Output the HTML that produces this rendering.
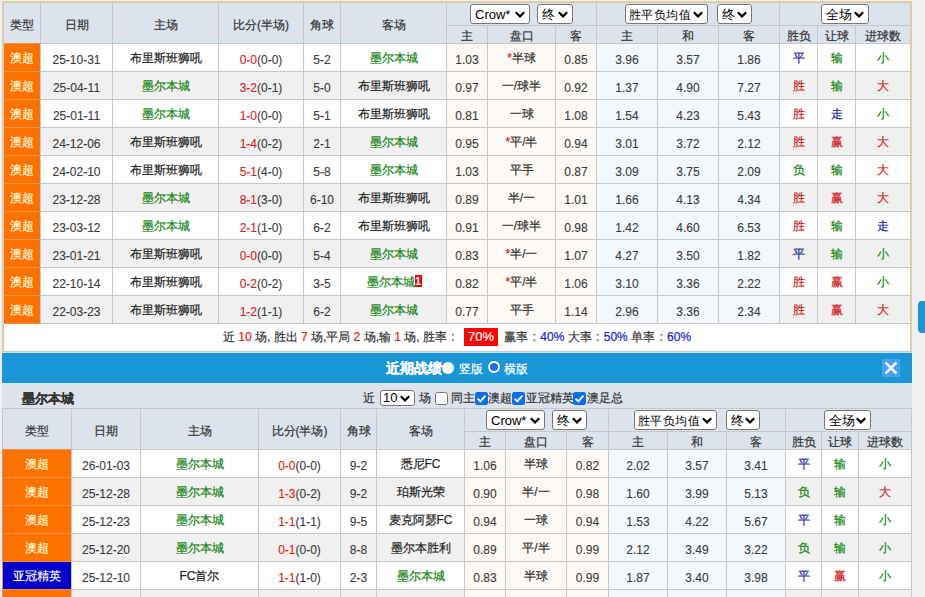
<!DOCTYPE html>
<html><head><meta charset="utf-8">
<style>
html,body{margin:0;padding:0;}
body{width:925px;height:597px;overflow:hidden;background:#f0f0f0;position:relative;font-family:"Liberation Sans",sans-serif;font-size:12px;color:#333;-webkit-text-stroke:0.2px currentColor;}
.c{position:absolute;box-sizing:content-box;text-align:center;white-space:nowrap;overflow:hidden;outline:1px solid #c5c7ca;}
.ln{position:absolute;}
.h{color:#333;}
.typ{color:#fff6d8;}
.g{color:#0f850f;}
.n{-webkit-text-stroke:0.1px currentColor;color:#3a3a3a;}
.k{color:#222;}
.r{color:#d42020;}
.u{color:#1c1c9c;}
.r2{color:#e02020;}
.rw{position:relative;left:-3px;}
.rc{position:absolute;right:-7px;top:0px;background:#e00;color:#fff;font-size:11px;line-height:12px;height:12px;width:7px;text-align:center;font-weight:bold;-webkit-text-stroke:0;}
.sel{position:absolute;box-sizing:border-box;background:#fff;border:1px solid #767676;border-radius:3px;}
#topbox{position:absolute;left:2px;top:0;width:906px;height:351px;border:2px solid #d9c6a0;border-bottom:0;background:#fff;}
#bar{position:absolute;left:2px;top:352px;width:910px;height:31px;background:#1a96d6;border-top:1px solid #bfe6f6;box-sizing:border-box;}
#grey{position:absolute;left:2px;top:383px;width:910px;height:214px;background:#dce3ed;border-top:1px solid #c8e8f8;box-sizing:border-box;}

.chev{position:absolute;}
.cb{position:absolute;}
.selt{position:absolute;color:#000;white-space:nowrap;-webkit-text-stroke:0;}
.t{position:absolute;white-space:nowrap;font-size:12px;line-height:14px;color:#333;}
.bold13{font-size:13px;font-weight:bold;}
.w{color:#fff;}
.bt{position:absolute;color:#fff;font-weight:bold;font-size:14px;line-height:16px;white-space:nowrap;}
.wdot{position:absolute;width:12px;height:12px;border-radius:50%;background:#fff;}
.rring{position:absolute;width:8px;height:8px;border-radius:50%;background:#1a6ff0;border:2px solid #fff;}
#close{position:absolute;left:882px;top:359px;width:18px;height:18px;background:#4ca3ec;}
#close svg{display:block;}
#sumrow{position:absolute;left:4px;top:324px;width:906px;height:27px;background:#fff;border-bottom:1px solid #c5c7ca;}
#sum{position:absolute;left:4px;top:324px;width:906px;height:27px;line-height:27px;text-align:center;white-space:nowrap;font-size:12px;color:#333;}
.b2{color:#1a1acc;}
.col{display:inline-block;width:12px;text-align:center;}
.rbox{display:inline-block;background:#f00;color:#fff;width:34px;height:18px;line-height:18px;text-align:center;font-size:13px;margin-left:5px;margin-right:3px;}
.tan{position:absolute;background:#d9c6a0;}
#tab{position:absolute;left:918px;top:301px;width:10px;height:32px;background:#1a96d6;border-radius:4px;}
</style></head><body>
<div id="topbox"></div>
<div id="bar"></div>
<div id="grey"></div>
<div id="tab"></div>
<div class="c h" style="left:4px;top:3px;width:36px;height:40px;line-height:44px;background:#dce3ed;">类型</div>
<div class="c h" style="left:41px;top:3px;width:71px;height:40px;line-height:44px;background:#dce3ed;">日期</div>
<div class="c h" style="left:113px;top:3px;width:105px;height:40px;line-height:44px;background:#dce3ed;">主场</div>
<div class="c h" style="left:219px;top:3px;width:84px;height:40px;line-height:44px;background:#dce3ed;">比分(半场)</div>
<div class="c h" style="left:304px;top:3px;width:36px;height:40px;line-height:44px;background:#dce3ed;">角球</div>
<div class="c h" style="left:341px;top:3px;width:105px;height:40px;line-height:44px;background:#dce3ed;">客场</div>
<div class="c h" style="left:447px;top:3px;width:149px;height:22px;line-height:27px;background:#dce3ed;"></div>
<div class="c h" style="left:597px;top:3px;width:182px;height:22px;line-height:27px;background:#dce3ed;"></div>
<div class="c h" style="left:780px;top:3px;width:130px;height:22px;line-height:27px;background:#dce3ed;"></div>
<div class="c h sub" style="left:447px;top:26px;width:40px;height:17px;line-height:21px;background:#dce3ed;">主</div>
<div class="c h sub" style="left:488px;top:26px;width:67px;height:17px;line-height:21px;background:#dce3ed;">盘口</div>
<div class="c h sub" style="left:556px;top:26px;width:40px;height:17px;line-height:21px;background:#dce3ed;">客</div>
<div class="c h sub" style="left:597px;top:26px;width:60px;height:17px;line-height:21px;background:#dce3ed;">主</div>
<div class="c h sub" style="left:658px;top:26px;width:60px;height:17px;line-height:21px;background:#dce3ed;">和</div>
<div class="c h sub" style="left:719px;top:26px;width:60px;height:17px;line-height:21px;background:#dce3ed;">客</div>
<div class="c h sub" style="left:780px;top:26px;width:37px;height:17px;line-height:21px;background:#dce3ed;">胜负</div>
<div class="c h sub" style="left:818px;top:26px;width:37px;height:17px;line-height:21px;background:#dce3ed;">让球</div>
<div class="c h sub" style="left:856px;top:26px;width:54px;height:17px;line-height:21px;background:#dce3ed;">进球数</div>
<div class="c typ" style="left:4px;top:44px;width:36px;height:27px;line-height:29px;background:#ff7200;outline-color:#f09040">澳超</div>
<div class="c n" style="left:41px;top:44px;width:71px;height:27px;line-height:32px;background:#ffffff;">25-10-31</div>
<div class="c k" style="left:113px;top:44px;width:105px;height:27px;line-height:28px;background:#ffffff;">布里斯班狮吼</div>
<div class="c n" style="left:219px;top:44px;width:84px;height:27px;line-height:32px;background:#ffffff;"><span class="r2">0-0</span>(0-0)</div>
<div class="c n" style="left:304px;top:44px;width:36px;height:27px;line-height:32px;background:#ffffff;">5-2</div>
<div class="c g" style="left:341px;top:44px;width:105px;height:27px;line-height:28px;background:#ffffff;">墨尔本城</div>
<div class="c n" style="left:447px;top:44px;width:40px;height:27px;line-height:32px;background:#fdf9f5;">1.03</div>
<div class="c " style="left:488px;top:44px;width:67px;height:27px;line-height:28px;background:#fdf9f5;"><span class="r2">*</span>半球</div>
<div class="c n" style="left:556px;top:44px;width:40px;height:27px;line-height:32px;background:#fdf9f5;">0.85</div>
<div class="c n" style="left:597px;top:44px;width:60px;height:27px;line-height:32px;background:#f2f8fc;">3.96</div>
<div class="c n" style="left:658px;top:44px;width:60px;height:27px;line-height:32px;background:#f2f8fc;">3.57</div>
<div class="c n" style="left:719px;top:44px;width:60px;height:27px;line-height:32px;background:#f2f8fc;">1.86</div>
<div class="c u" style="left:780px;top:44px;width:37px;height:27px;line-height:28px;background:#ffffff;">平</div>
<div class="c g" style="left:818px;top:44px;width:37px;height:27px;line-height:28px;background:#ffffff;">输</div>
<div class="c g" style="left:856px;top:44px;width:54px;height:27px;line-height:28px;background:#ffffff;">小</div>
<div class="c typ" style="left:4px;top:72px;width:36px;height:27px;line-height:29px;background:#ff7200;outline-color:#f09040">澳超</div>
<div class="c n" style="left:41px;top:72px;width:71px;height:27px;line-height:32px;background:#f0f0f0;">25-04-11</div>
<div class="c g" style="left:113px;top:72px;width:105px;height:27px;line-height:28px;background:#f0f0f0;">墨尔本城</div>
<div class="c n" style="left:219px;top:72px;width:84px;height:27px;line-height:32px;background:#f0f0f0;"><span class="r2">3-2</span>(0-1)</div>
<div class="c n" style="left:304px;top:72px;width:36px;height:27px;line-height:32px;background:#f0f0f0;">5-0</div>
<div class="c k" style="left:341px;top:72px;width:105px;height:27px;line-height:28px;background:#f0f0f0;">布里斯班狮吼</div>
<div class="c n" style="left:447px;top:72px;width:40px;height:27px;line-height:32px;background:#fdf9f5;">0.97</div>
<div class="c " style="left:488px;top:72px;width:67px;height:27px;line-height:28px;background:#fdf9f5;">一/球半</div>
<div class="c n" style="left:556px;top:72px;width:40px;height:27px;line-height:32px;background:#fdf9f5;">0.92</div>
<div class="c n" style="left:597px;top:72px;width:60px;height:27px;line-height:32px;background:#f2f8fc;">1.37</div>
<div class="c n" style="left:658px;top:72px;width:60px;height:27px;line-height:32px;background:#f2f8fc;">4.90</div>
<div class="c n" style="left:719px;top:72px;width:60px;height:27px;line-height:32px;background:#f2f8fc;">7.27</div>
<div class="c r" style="left:780px;top:72px;width:37px;height:27px;line-height:28px;background:#f0f0f0;">胜</div>
<div class="c g" style="left:818px;top:72px;width:37px;height:27px;line-height:28px;background:#f0f0f0;">输</div>
<div class="c r" style="left:856px;top:72px;width:54px;height:27px;line-height:28px;background:#f0f0f0;">大</div>
<div class="c typ" style="left:4px;top:100px;width:36px;height:27px;line-height:29px;background:#ff7200;outline-color:#f09040">澳超</div>
<div class="c n" style="left:41px;top:100px;width:71px;height:27px;line-height:32px;background:#ffffff;">25-01-11</div>
<div class="c g" style="left:113px;top:100px;width:105px;height:27px;line-height:28px;background:#ffffff;">墨尔本城</div>
<div class="c n" style="left:219px;top:100px;width:84px;height:27px;line-height:32px;background:#ffffff;"><span class="r2">1-0</span>(0-0)</div>
<div class="c n" style="left:304px;top:100px;width:36px;height:27px;line-height:32px;background:#ffffff;">5-1</div>
<div class="c k" style="left:341px;top:100px;width:105px;height:27px;line-height:28px;background:#ffffff;">布里斯班狮吼</div>
<div class="c n" style="left:447px;top:100px;width:40px;height:27px;line-height:32px;background:#fdf9f5;">0.81</div>
<div class="c " style="left:488px;top:100px;width:67px;height:27px;line-height:28px;background:#fdf9f5;">一球</div>
<div class="c n" style="left:556px;top:100px;width:40px;height:27px;line-height:32px;background:#fdf9f5;">1.08</div>
<div class="c n" style="left:597px;top:100px;width:60px;height:27px;line-height:32px;background:#f2f8fc;">1.54</div>
<div class="c n" style="left:658px;top:100px;width:60px;height:27px;line-height:32px;background:#f2f8fc;">4.23</div>
<div class="c n" style="left:719px;top:100px;width:60px;height:27px;line-height:32px;background:#f2f8fc;">5.43</div>
<div class="c r" style="left:780px;top:100px;width:37px;height:27px;line-height:28px;background:#ffffff;">胜</div>
<div class="c u" style="left:818px;top:100px;width:37px;height:27px;line-height:28px;background:#ffffff;">走</div>
<div class="c g" style="left:856px;top:100px;width:54px;height:27px;line-height:28px;background:#ffffff;">小</div>
<div class="c typ" style="left:4px;top:128px;width:36px;height:27px;line-height:29px;background:#ff7200;outline-color:#f09040">澳超</div>
<div class="c n" style="left:41px;top:128px;width:71px;height:27px;line-height:32px;background:#f0f0f0;">24-12-06</div>
<div class="c k" style="left:113px;top:128px;width:105px;height:27px;line-height:28px;background:#f0f0f0;">布里斯班狮吼</div>
<div class="c n" style="left:219px;top:128px;width:84px;height:27px;line-height:32px;background:#f0f0f0;"><span class="r2">1-4</span>(0-2)</div>
<div class="c n" style="left:304px;top:128px;width:36px;height:27px;line-height:32px;background:#f0f0f0;">2-1</div>
<div class="c g" style="left:341px;top:128px;width:105px;height:27px;line-height:28px;background:#f0f0f0;">墨尔本城</div>
<div class="c n" style="left:447px;top:128px;width:40px;height:27px;line-height:32px;background:#fdf9f5;">0.95</div>
<div class="c " style="left:488px;top:128px;width:67px;height:27px;line-height:28px;background:#fdf9f5;"><span class="r2">*</span>平/半</div>
<div class="c n" style="left:556px;top:128px;width:40px;height:27px;line-height:32px;background:#fdf9f5;">0.94</div>
<div class="c n" style="left:597px;top:128px;width:60px;height:27px;line-height:32px;background:#f2f8fc;">3.01</div>
<div class="c n" style="left:658px;top:128px;width:60px;height:27px;line-height:32px;background:#f2f8fc;">3.72</div>
<div class="c n" style="left:719px;top:128px;width:60px;height:27px;line-height:32px;background:#f2f8fc;">2.12</div>
<div class="c r" style="left:780px;top:128px;width:37px;height:27px;line-height:28px;background:#f0f0f0;">胜</div>
<div class="c r" style="left:818px;top:128px;width:37px;height:27px;line-height:28px;background:#f0f0f0;">赢</div>
<div class="c r" style="left:856px;top:128px;width:54px;height:27px;line-height:28px;background:#f0f0f0;">大</div>
<div class="c typ" style="left:4px;top:156px;width:36px;height:27px;line-height:29px;background:#ff7200;outline-color:#f09040">澳超</div>
<div class="c n" style="left:41px;top:156px;width:71px;height:27px;line-height:32px;background:#ffffff;">24-02-10</div>
<div class="c k" style="left:113px;top:156px;width:105px;height:27px;line-height:28px;background:#ffffff;">布里斯班狮吼</div>
<div class="c n" style="left:219px;top:156px;width:84px;height:27px;line-height:32px;background:#ffffff;"><span class="r2">5-1</span>(4-0)</div>
<div class="c n" style="left:304px;top:156px;width:36px;height:27px;line-height:32px;background:#ffffff;">5-8</div>
<div class="c g" style="left:341px;top:156px;width:105px;height:27px;line-height:28px;background:#ffffff;">墨尔本城</div>
<div class="c n" style="left:447px;top:156px;width:40px;height:27px;line-height:32px;background:#fdf9f5;">1.03</div>
<div class="c " style="left:488px;top:156px;width:67px;height:27px;line-height:28px;background:#fdf9f5;">平手</div>
<div class="c n" style="left:556px;top:156px;width:40px;height:27px;line-height:32px;background:#fdf9f5;">0.87</div>
<div class="c n" style="left:597px;top:156px;width:60px;height:27px;line-height:32px;background:#f2f8fc;">3.09</div>
<div class="c n" style="left:658px;top:156px;width:60px;height:27px;line-height:32px;background:#f2f8fc;">3.75</div>
<div class="c n" style="left:719px;top:156px;width:60px;height:27px;line-height:32px;background:#f2f8fc;">2.09</div>
<div class="c g" style="left:780px;top:156px;width:37px;height:27px;line-height:28px;background:#ffffff;">负</div>
<div class="c g" style="left:818px;top:156px;width:37px;height:27px;line-height:28px;background:#ffffff;">输</div>
<div class="c r" style="left:856px;top:156px;width:54px;height:27px;line-height:28px;background:#ffffff;">大</div>
<div class="c typ" style="left:4px;top:184px;width:36px;height:27px;line-height:29px;background:#ff7200;outline-color:#f09040">澳超</div>
<div class="c n" style="left:41px;top:184px;width:71px;height:27px;line-height:32px;background:#f0f0f0;">23-12-28</div>
<div class="c g" style="left:113px;top:184px;width:105px;height:27px;line-height:28px;background:#f0f0f0;">墨尔本城</div>
<div class="c n" style="left:219px;top:184px;width:84px;height:27px;line-height:32px;background:#f0f0f0;"><span class="r2">8-1</span>(3-0)</div>
<div class="c n" style="left:304px;top:184px;width:36px;height:27px;line-height:32px;background:#f0f0f0;">6-10</div>
<div class="c k" style="left:341px;top:184px;width:105px;height:27px;line-height:28px;background:#f0f0f0;">布里斯班狮吼</div>
<div class="c n" style="left:447px;top:184px;width:40px;height:27px;line-height:32px;background:#fdf9f5;">0.89</div>
<div class="c " style="left:488px;top:184px;width:67px;height:27px;line-height:28px;background:#fdf9f5;">半/一</div>
<div class="c n" style="left:556px;top:184px;width:40px;height:27px;line-height:32px;background:#fdf9f5;">1.01</div>
<div class="c n" style="left:597px;top:184px;width:60px;height:27px;line-height:32px;background:#f2f8fc;">1.66</div>
<div class="c n" style="left:658px;top:184px;width:60px;height:27px;line-height:32px;background:#f2f8fc;">4.13</div>
<div class="c n" style="left:719px;top:184px;width:60px;height:27px;line-height:32px;background:#f2f8fc;">4.34</div>
<div class="c r" style="left:780px;top:184px;width:37px;height:27px;line-height:28px;background:#f0f0f0;">胜</div>
<div class="c r" style="left:818px;top:184px;width:37px;height:27px;line-height:28px;background:#f0f0f0;">赢</div>
<div class="c r" style="left:856px;top:184px;width:54px;height:27px;line-height:28px;background:#f0f0f0;">大</div>
<div class="c typ" style="left:4px;top:212px;width:36px;height:27px;line-height:29px;background:#ff7200;outline-color:#f09040">澳超</div>
<div class="c n" style="left:41px;top:212px;width:71px;height:27px;line-height:32px;background:#ffffff;">23-03-12</div>
<div class="c g" style="left:113px;top:212px;width:105px;height:27px;line-height:28px;background:#ffffff;">墨尔本城</div>
<div class="c n" style="left:219px;top:212px;width:84px;height:27px;line-height:32px;background:#ffffff;"><span class="r2">2-1</span>(1-0)</div>
<div class="c n" style="left:304px;top:212px;width:36px;height:27px;line-height:32px;background:#ffffff;">6-2</div>
<div class="c k" style="left:341px;top:212px;width:105px;height:27px;line-height:28px;background:#ffffff;">布里斯班狮吼</div>
<div class="c n" style="left:447px;top:212px;width:40px;height:27px;line-height:32px;background:#fdf9f5;">0.91</div>
<div class="c " style="left:488px;top:212px;width:67px;height:27px;line-height:28px;background:#fdf9f5;">一/球半</div>
<div class="c n" style="left:556px;top:212px;width:40px;height:27px;line-height:32px;background:#fdf9f5;">0.98</div>
<div class="c n" style="left:597px;top:212px;width:60px;height:27px;line-height:32px;background:#f2f8fc;">1.42</div>
<div class="c n" style="left:658px;top:212px;width:60px;height:27px;line-height:32px;background:#f2f8fc;">4.60</div>
<div class="c n" style="left:719px;top:212px;width:60px;height:27px;line-height:32px;background:#f2f8fc;">6.53</div>
<div class="c r" style="left:780px;top:212px;width:37px;height:27px;line-height:28px;background:#ffffff;">胜</div>
<div class="c g" style="left:818px;top:212px;width:37px;height:27px;line-height:28px;background:#ffffff;">输</div>
<div class="c u" style="left:856px;top:212px;width:54px;height:27px;line-height:28px;background:#ffffff;">走</div>
<div class="c typ" style="left:4px;top:240px;width:36px;height:27px;line-height:29px;background:#ff7200;outline-color:#f09040">澳超</div>
<div class="c n" style="left:41px;top:240px;width:71px;height:27px;line-height:32px;background:#f0f0f0;">23-01-21</div>
<div class="c k" style="left:113px;top:240px;width:105px;height:27px;line-height:28px;background:#f0f0f0;">布里斯班狮吼</div>
<div class="c n" style="left:219px;top:240px;width:84px;height:27px;line-height:32px;background:#f0f0f0;"><span class="r2">0-0</span>(0-0)</div>
<div class="c n" style="left:304px;top:240px;width:36px;height:27px;line-height:32px;background:#f0f0f0;">5-4</div>
<div class="c g" style="left:341px;top:240px;width:105px;height:27px;line-height:28px;background:#f0f0f0;">墨尔本城</div>
<div class="c n" style="left:447px;top:240px;width:40px;height:27px;line-height:32px;background:#fdf9f5;">0.83</div>
<div class="c " style="left:488px;top:240px;width:67px;height:27px;line-height:28px;background:#fdf9f5;"><span class="r2">*</span>半/一</div>
<div class="c n" style="left:556px;top:240px;width:40px;height:27px;line-height:32px;background:#fdf9f5;">1.07</div>
<div class="c n" style="left:597px;top:240px;width:60px;height:27px;line-height:32px;background:#f2f8fc;">4.27</div>
<div class="c n" style="left:658px;top:240px;width:60px;height:27px;line-height:32px;background:#f2f8fc;">3.50</div>
<div class="c n" style="left:719px;top:240px;width:60px;height:27px;line-height:32px;background:#f2f8fc;">1.82</div>
<div class="c u" style="left:780px;top:240px;width:37px;height:27px;line-height:28px;background:#f0f0f0;">平</div>
<div class="c g" style="left:818px;top:240px;width:37px;height:27px;line-height:28px;background:#f0f0f0;">输</div>
<div class="c g" style="left:856px;top:240px;width:54px;height:27px;line-height:28px;background:#f0f0f0;">小</div>
<div class="c typ" style="left:4px;top:268px;width:36px;height:27px;line-height:29px;background:#ff7200;outline-color:#f09040">澳超</div>
<div class="c n" style="left:41px;top:268px;width:71px;height:27px;line-height:32px;background:#ffffff;">22-10-14</div>
<div class="c k" style="left:113px;top:268px;width:105px;height:27px;line-height:28px;background:#ffffff;">布里斯班狮吼</div>
<div class="c n" style="left:219px;top:268px;width:84px;height:27px;line-height:32px;background:#ffffff;"><span class="r2">0-2</span>(0-2)</div>
<div class="c n" style="left:304px;top:268px;width:36px;height:27px;line-height:32px;background:#ffffff;">3-5</div>
<div class="c g" style="left:341px;top:268px;width:105px;height:27px;line-height:28px;background:#ffffff;"><span class="rw">墨尔本城<b class="rc">1</b></span></div>
<div class="c n" style="left:447px;top:268px;width:40px;height:27px;line-height:32px;background:#fdf9f5;">0.82</div>
<div class="c " style="left:488px;top:268px;width:67px;height:27px;line-height:28px;background:#fdf9f5;"><span class="r2">*</span>平/半</div>
<div class="c n" style="left:556px;top:268px;width:40px;height:27px;line-height:32px;background:#fdf9f5;">1.06</div>
<div class="c n" style="left:597px;top:268px;width:60px;height:27px;line-height:32px;background:#f2f8fc;">3.10</div>
<div class="c n" style="left:658px;top:268px;width:60px;height:27px;line-height:32px;background:#f2f8fc;">3.36</div>
<div class="c n" style="left:719px;top:268px;width:60px;height:27px;line-height:32px;background:#f2f8fc;">2.22</div>
<div class="c r" style="left:780px;top:268px;width:37px;height:27px;line-height:28px;background:#ffffff;">胜</div>
<div class="c r" style="left:818px;top:268px;width:37px;height:27px;line-height:28px;background:#ffffff;">赢</div>
<div class="c g" style="left:856px;top:268px;width:54px;height:27px;line-height:28px;background:#ffffff;">小</div>
<div class="c typ" style="left:4px;top:296px;width:36px;height:27px;line-height:29px;background:#ff7200;outline-color:#f09040">澳超</div>
<div class="c n" style="left:41px;top:296px;width:71px;height:27px;line-height:32px;background:#f0f0f0;">22-03-23</div>
<div class="c k" style="left:113px;top:296px;width:105px;height:27px;line-height:28px;background:#f0f0f0;">布里斯班狮吼</div>
<div class="c n" style="left:219px;top:296px;width:84px;height:27px;line-height:32px;background:#f0f0f0;"><span class="r2">1-2</span>(1-1)</div>
<div class="c n" style="left:304px;top:296px;width:36px;height:27px;line-height:32px;background:#f0f0f0;">6-2</div>
<div class="c g" style="left:341px;top:296px;width:105px;height:27px;line-height:28px;background:#f0f0f0;">墨尔本城</div>
<div class="c n" style="left:447px;top:296px;width:40px;height:27px;line-height:32px;background:#fdf9f5;">0.77</div>
<div class="c " style="left:488px;top:296px;width:67px;height:27px;line-height:28px;background:#fdf9f5;">平手</div>
<div class="c n" style="left:556px;top:296px;width:40px;height:27px;line-height:32px;background:#fdf9f5;">1.14</div>
<div class="c n" style="left:597px;top:296px;width:60px;height:27px;line-height:32px;background:#f2f8fc;">2.96</div>
<div class="c n" style="left:658px;top:296px;width:60px;height:27px;line-height:32px;background:#f2f8fc;">3.36</div>
<div class="c n" style="left:719px;top:296px;width:60px;height:27px;line-height:32px;background:#f2f8fc;">2.34</div>
<div class="c r" style="left:780px;top:296px;width:37px;height:27px;line-height:28px;background:#f0f0f0;">胜</div>
<div class="c r" style="left:818px;top:296px;width:37px;height:27px;line-height:28px;background:#f0f0f0;">赢</div>
<div class="c r" style="left:856px;top:296px;width:54px;height:27px;line-height:28px;background:#f0f0f0;">大</div>
<div class="c h" style="left:3px;top:409px;width:68px;height:40px;line-height:44px;background:#dce3ed;">类型</div>
<div class="c h" style="left:72px;top:409px;width:68px;height:40px;line-height:44px;background:#dce3ed;">日期</div>
<div class="c h" style="left:141px;top:409px;width:117px;height:40px;line-height:44px;background:#dce3ed;">主场</div>
<div class="c h" style="left:259px;top:409px;width:81px;height:40px;line-height:44px;background:#dce3ed;">比分(半场)</div>
<div class="c h" style="left:341px;top:409px;width:35px;height:40px;line-height:44px;background:#dce3ed;">角球</div>
<div class="c h" style="left:377px;top:409px;width:87px;height:40px;line-height:44px;background:#dce3ed;">客场</div>
<div class="c h" style="left:465px;top:409px;width:143px;height:22px;line-height:27px;background:#dce3ed;"></div>
<div class="c h" style="left:609px;top:409px;width:176px;height:22px;line-height:27px;background:#dce3ed;"></div>
<div class="c h" style="left:786px;top:409px;width:125px;height:22px;line-height:27px;background:#dce3ed;"></div>
<div class="c h sub" style="left:465px;top:432px;width:40px;height:17px;line-height:21px;background:#dce3ed;">主</div>
<div class="c h sub" style="left:506px;top:432px;width:60px;height:17px;line-height:21px;background:#dce3ed;">盘口</div>
<div class="c h sub" style="left:567px;top:432px;width:41px;height:17px;line-height:21px;background:#dce3ed;">客</div>
<div class="c h sub" style="left:609px;top:432px;width:58px;height:17px;line-height:21px;background:#dce3ed;">主</div>
<div class="c h sub" style="left:668px;top:432px;width:58px;height:17px;line-height:21px;background:#dce3ed;">和</div>
<div class="c h sub" style="left:727px;top:432px;width:58px;height:17px;line-height:21px;background:#dce3ed;">客</div>
<div class="c h sub" style="left:786px;top:432px;width:35px;height:17px;line-height:21px;background:#dce3ed;">胜负</div>
<div class="c h sub" style="left:822px;top:432px;width:36px;height:17px;line-height:21px;background:#dce3ed;">让球</div>
<div class="c h sub" style="left:859px;top:432px;width:52px;height:17px;line-height:21px;background:#dce3ed;">进球数</div>
<div class="c typ" style="left:3px;top:450px;width:68px;height:27px;line-height:29px;background:#ff7200;outline-color:#f09040">澳超</div>
<div class="c n" style="left:72px;top:450px;width:68px;height:27px;line-height:32px;background:#ffffff;">26-01-03</div>
<div class="c g" style="left:141px;top:450px;width:117px;height:27px;line-height:28px;background:#ffffff;">墨尔本城</div>
<div class="c n" style="left:259px;top:450px;width:81px;height:27px;line-height:32px;background:#ffffff;"><span class="r2">0-0</span>(0-0)</div>
<div class="c n" style="left:341px;top:450px;width:35px;height:27px;line-height:32px;background:#ffffff;">9-2</div>
<div class="c k" style="left:377px;top:450px;width:87px;height:27px;line-height:28px;background:#ffffff;">悉尼FC</div>
<div class="c n" style="left:465px;top:450px;width:40px;height:27px;line-height:32px;background:#fdf9f5;">1.06</div>
<div class="c " style="left:506px;top:450px;width:60px;height:27px;line-height:28px;background:#fdf9f5;">半球</div>
<div class="c n" style="left:567px;top:450px;width:41px;height:27px;line-height:32px;background:#fdf9f5;">0.82</div>
<div class="c n" style="left:609px;top:450px;width:58px;height:27px;line-height:32px;background:#f2f8fc;">2.02</div>
<div class="c n" style="left:668px;top:450px;width:58px;height:27px;line-height:32px;background:#f2f8fc;">3.57</div>
<div class="c n" style="left:727px;top:450px;width:58px;height:27px;line-height:32px;background:#f2f8fc;">3.41</div>
<div class="c u" style="left:786px;top:450px;width:35px;height:27px;line-height:28px;background:#ffffff;">平</div>
<div class="c g" style="left:822px;top:450px;width:36px;height:27px;line-height:28px;background:#ffffff;">输</div>
<div class="c g" style="left:859px;top:450px;width:52px;height:27px;line-height:28px;background:#ffffff;">小</div>
<div class="c typ" style="left:3px;top:478px;width:68px;height:27px;line-height:29px;background:#ff7200;outline-color:#f09040">澳超</div>
<div class="c n" style="left:72px;top:478px;width:68px;height:27px;line-height:32px;background:#f0f0f0;">25-12-28</div>
<div class="c g" style="left:141px;top:478px;width:117px;height:27px;line-height:28px;background:#f0f0f0;">墨尔本城</div>
<div class="c n" style="left:259px;top:478px;width:81px;height:27px;line-height:32px;background:#f0f0f0;"><span class="r2">1-3</span>(0-2)</div>
<div class="c n" style="left:341px;top:478px;width:35px;height:27px;line-height:32px;background:#f0f0f0;">9-2</div>
<div class="c k" style="left:377px;top:478px;width:87px;height:27px;line-height:28px;background:#f0f0f0;">珀斯光荣</div>
<div class="c n" style="left:465px;top:478px;width:40px;height:27px;line-height:32px;background:#fdf9f5;">0.90</div>
<div class="c " style="left:506px;top:478px;width:60px;height:27px;line-height:28px;background:#fdf9f5;">半/一</div>
<div class="c n" style="left:567px;top:478px;width:41px;height:27px;line-height:32px;background:#fdf9f5;">0.98</div>
<div class="c n" style="left:609px;top:478px;width:58px;height:27px;line-height:32px;background:#f2f8fc;">1.60</div>
<div class="c n" style="left:668px;top:478px;width:58px;height:27px;line-height:32px;background:#f2f8fc;">3.99</div>
<div class="c n" style="left:727px;top:478px;width:58px;height:27px;line-height:32px;background:#f2f8fc;">5.13</div>
<div class="c g" style="left:786px;top:478px;width:35px;height:27px;line-height:28px;background:#f0f0f0;">负</div>
<div class="c g" style="left:822px;top:478px;width:36px;height:27px;line-height:28px;background:#f0f0f0;">输</div>
<div class="c r" style="left:859px;top:478px;width:52px;height:27px;line-height:28px;background:#f0f0f0;">大</div>
<div class="c typ" style="left:3px;top:506px;width:68px;height:27px;line-height:29px;background:#ff7200;outline-color:#f09040">澳超</div>
<div class="c n" style="left:72px;top:506px;width:68px;height:27px;line-height:32px;background:#ffffff;">25-12-23</div>
<div class="c g" style="left:141px;top:506px;width:117px;height:27px;line-height:28px;background:#ffffff;">墨尔本城</div>
<div class="c n" style="left:259px;top:506px;width:81px;height:27px;line-height:32px;background:#ffffff;"><span class="r2">1-1</span>(1-1)</div>
<div class="c n" style="left:341px;top:506px;width:35px;height:27px;line-height:32px;background:#ffffff;">9-5</div>
<div class="c k" style="left:377px;top:506px;width:87px;height:27px;line-height:28px;background:#ffffff;">麦克阿瑟FC</div>
<div class="c n" style="left:465px;top:506px;width:40px;height:27px;line-height:32px;background:#fdf9f5;">0.94</div>
<div class="c " style="left:506px;top:506px;width:60px;height:27px;line-height:28px;background:#fdf9f5;">一球</div>
<div class="c n" style="left:567px;top:506px;width:41px;height:27px;line-height:32px;background:#fdf9f5;">0.94</div>
<div class="c n" style="left:609px;top:506px;width:58px;height:27px;line-height:32px;background:#f2f8fc;">1.53</div>
<div class="c n" style="left:668px;top:506px;width:58px;height:27px;line-height:32px;background:#f2f8fc;">4.22</div>
<div class="c n" style="left:727px;top:506px;width:58px;height:27px;line-height:32px;background:#f2f8fc;">5.67</div>
<div class="c u" style="left:786px;top:506px;width:35px;height:27px;line-height:28px;background:#ffffff;">平</div>
<div class="c g" style="left:822px;top:506px;width:36px;height:27px;line-height:28px;background:#ffffff;">输</div>
<div class="c g" style="left:859px;top:506px;width:52px;height:27px;line-height:28px;background:#ffffff;">小</div>
<div class="c typ" style="left:3px;top:534px;width:68px;height:27px;line-height:29px;background:#ff7200;outline-color:#f09040">澳超</div>
<div class="c n" style="left:72px;top:534px;width:68px;height:27px;line-height:32px;background:#f0f0f0;">25-12-20</div>
<div class="c g" style="left:141px;top:534px;width:117px;height:27px;line-height:28px;background:#f0f0f0;">墨尔本城</div>
<div class="c n" style="left:259px;top:534px;width:81px;height:27px;line-height:32px;background:#f0f0f0;"><span class="r2">0-1</span>(0-0)</div>
<div class="c n" style="left:341px;top:534px;width:35px;height:27px;line-height:32px;background:#f0f0f0;">8-8</div>
<div class="c k" style="left:377px;top:534px;width:87px;height:27px;line-height:28px;background:#f0f0f0;">墨尔本胜利</div>
<div class="c n" style="left:465px;top:534px;width:40px;height:27px;line-height:32px;background:#fdf9f5;">0.89</div>
<div class="c " style="left:506px;top:534px;width:60px;height:27px;line-height:28px;background:#fdf9f5;">平/半</div>
<div class="c n" style="left:567px;top:534px;width:41px;height:27px;line-height:32px;background:#fdf9f5;">0.99</div>
<div class="c n" style="left:609px;top:534px;width:58px;height:27px;line-height:32px;background:#f2f8fc;">2.12</div>
<div class="c n" style="left:668px;top:534px;width:58px;height:27px;line-height:32px;background:#f2f8fc;">3.49</div>
<div class="c n" style="left:727px;top:534px;width:58px;height:27px;line-height:32px;background:#f2f8fc;">3.22</div>
<div class="c g" style="left:786px;top:534px;width:35px;height:27px;line-height:28px;background:#f0f0f0;">负</div>
<div class="c g" style="left:822px;top:534px;width:36px;height:27px;line-height:28px;background:#f0f0f0;">输</div>
<div class="c g" style="left:859px;top:534px;width:52px;height:27px;line-height:28px;background:#f0f0f0;">小</div>
<div class="c typ" style="left:3px;top:562px;width:68px;height:27px;line-height:29px;background:#0000cc;outline-color:#f09040">亚冠精英</div>
<div class="c n" style="left:72px;top:562px;width:68px;height:27px;line-height:32px;background:#ffffff;">25-12-10</div>
<div class="c k" style="left:141px;top:562px;width:117px;height:27px;line-height:28px;background:#ffffff;">FC首尔</div>
<div class="c n" style="left:259px;top:562px;width:81px;height:27px;line-height:32px;background:#ffffff;"><span class="r2">1-1</span>(1-0)</div>
<div class="c n" style="left:341px;top:562px;width:35px;height:27px;line-height:32px;background:#ffffff;">2-3</div>
<div class="c g" style="left:377px;top:562px;width:87px;height:27px;line-height:28px;background:#ffffff;">墨尔本城</div>
<div class="c n" style="left:465px;top:562px;width:40px;height:27px;line-height:32px;background:#fdf9f5;">0.83</div>
<div class="c " style="left:506px;top:562px;width:60px;height:27px;line-height:28px;background:#fdf9f5;">半球</div>
<div class="c n" style="left:567px;top:562px;width:41px;height:27px;line-height:32px;background:#fdf9f5;">0.99</div>
<div class="c n" style="left:609px;top:562px;width:58px;height:27px;line-height:32px;background:#f2f8fc;">1.87</div>
<div class="c n" style="left:668px;top:562px;width:58px;height:27px;line-height:32px;background:#f2f8fc;">3.40</div>
<div class="c n" style="left:727px;top:562px;width:58px;height:27px;line-height:32px;background:#f2f8fc;">3.98</div>
<div class="c u" style="left:786px;top:562px;width:35px;height:27px;line-height:28px;background:#ffffff;">平</div>
<div class="c r" style="left:822px;top:562px;width:36px;height:27px;line-height:28px;background:#ffffff;">赢</div>
<div class="c g" style="left:859px;top:562px;width:52px;height:27px;line-height:28px;background:#ffffff;">小</div>
<div class="c typ" style="left:3px;top:590px;width:68px;height:27px;line-height:29px;background:#ff7200;outline-color:#f09040">澳超</div>
<div class="c n" style="left:72px;top:590px;width:68px;height:27px;line-height:32px;background:#f0f0f0;"></div>
<div class="c " style="left:141px;top:590px;width:117px;height:27px;line-height:28px;background:#f0f0f0;"></div>
<div class="c n" style="left:259px;top:590px;width:81px;height:27px;line-height:32px;background:#f0f0f0;"></div>
<div class="c n" style="left:341px;top:590px;width:35px;height:27px;line-height:32px;background:#f0f0f0;"></div>
<div class="c " style="left:377px;top:590px;width:87px;height:27px;line-height:28px;background:#f0f0f0;"></div>
<div class="c n" style="left:465px;top:590px;width:40px;height:27px;line-height:32px;background:#fdf9f5;"></div>
<div class="c " style="left:506px;top:590px;width:60px;height:27px;line-height:28px;background:#fdf9f5;"></div>
<div class="c n" style="left:567px;top:590px;width:41px;height:27px;line-height:32px;background:#fdf9f5;"></div>
<div class="c n" style="left:609px;top:590px;width:58px;height:27px;line-height:32px;background:#f2f8fc;"></div>
<div class="c n" style="left:668px;top:590px;width:58px;height:27px;line-height:32px;background:#f2f8fc;"></div>
<div class="c n" style="left:727px;top:590px;width:58px;height:27px;line-height:32px;background:#f2f8fc;"></div>
<div class="c u" style="left:786px;top:590px;width:35px;height:27px;line-height:28px;background:#f0f0f0;"></div>
<div class="c g" style="left:822px;top:590px;width:36px;height:27px;line-height:28px;background:#f0f0f0;"></div>
<div class="c g" style="left:859px;top:590px;width:52px;height:27px;line-height:28px;background:#f0f0f0;"></div>
<div id="sumrow"></div>
<div id="sum">近 <span class="r2">10</span> 场, 胜出 <span class="r2">7</span> 场,平局 <span class="r2">2</span> 场,输 <span class="r2">1</span> 场, 胜率<span class="col">:</span><span class="rbox">70%</span> 赢率<span class="col">:</span><span class="b2">40%</span> 大率<span class="col">:</span><span class="b2">50%</span> 单率<span class="col">:</span><span class="b2">60%</span></div>
<div class="bt" style="left:386px;top:360px;">近期战绩</div><div class="wdot" style="left:442px;top:362px"></div><div class="t w" style="left:459px;top:362px">竖版</div><div class="rring" style="left:488px;top:361px"></div><div class="t w" style="left:504px;top:362px">横版</div><div id="close"><svg width="18" height="18" viewBox="0 0 18 18"><path d="M3.6 3.6 L14.4 14.4 M14.4 3.6 L3.6 14.4" stroke="#fff" stroke-width="2.3"/></svg></div>
<div class="sel" style="left:470px;top:4px;width:60px;height:20px;"></div><div class="selt" style="left:475px;top:5px;height:20px;line-height:20px;font-size:13px;">Crow*</div><svg class="chev" style="left:515px;top:11px" width="10" height="7" viewBox="0 0 10 7"><path d="M0.8 1.3 L5 5.4 L9.2 1.3" stroke="#000" stroke-width="2.2" fill="none"/></svg><div class="sel" style="left:537px;top:4px;width:36px;height:20px;"></div><div class="selt" style="left:542px;top:5px;height:20px;line-height:20px;font-size:12.5px;">终</div><svg class="chev" style="left:558px;top:11px" width="10" height="7" viewBox="0 0 10 7"><path d="M0.8 1.3 L5 5.4 L9.2 1.3" stroke="#000" stroke-width="2.2" fill="none"/></svg><div class="sel" style="left:625px;top:4px;width:83px;height:20px;"></div><div class="selt" style="left:629px;top:5px;height:20px;line-height:20px;font-size:12px;letter-spacing:0.4px;">胜平负均值</div><svg class="chev" style="left:693px;top:11px" width="10" height="7" viewBox="0 0 10 7"><path d="M0.8 1.3 L5 5.4 L9.2 1.3" stroke="#000" stroke-width="2.2" fill="none"/></svg><div class="sel" style="left:717px;top:4px;width:35px;height:20px;"></div><div class="selt" style="left:722px;top:5px;height:20px;line-height:20px;font-size:12.5px;">终</div><svg class="chev" style="left:737px;top:11px" width="10" height="7" viewBox="0 0 10 7"><path d="M0.8 1.3 L5 5.4 L9.2 1.3" stroke="#000" stroke-width="2.2" fill="none"/></svg><div class="sel" style="left:821px;top:4px;width:48px;height:20px;"></div><div class="selt" style="left:826px;top:5px;height:20px;line-height:20px;font-size:12.5px;">全场</div><svg class="chev" style="left:854px;top:11px" width="10" height="7" viewBox="0 0 10 7"><path d="M0.8 1.3 L5 5.4 L9.2 1.3" stroke="#000" stroke-width="2.2" fill="none"/></svg><div class="sel" style="left:486px;top:410px;width:59px;height:20px;"></div><div class="selt" style="left:491px;top:411px;height:20px;line-height:20px;font-size:13px;">Crow*</div><svg class="chev" style="left:530px;top:417px" width="10" height="7" viewBox="0 0 10 7"><path d="M0.8 1.3 L5 5.4 L9.2 1.3" stroke="#000" stroke-width="2.2" fill="none"/></svg><div class="sel" style="left:552px;top:410px;width:35px;height:20px;"></div><div class="selt" style="left:557px;top:411px;height:20px;line-height:20px;font-size:12.5px;">终</div><svg class="chev" style="left:572px;top:417px" width="10" height="7" viewBox="0 0 10 7"><path d="M0.8 1.3 L5 5.4 L9.2 1.3" stroke="#000" stroke-width="2.2" fill="none"/></svg><div class="sel" style="left:634px;top:410px;width:83px;height:20px;"></div><div class="selt" style="left:638px;top:411px;height:20px;line-height:20px;font-size:12px;letter-spacing:0.4px;">胜平负均值</div><svg class="chev" style="left:702px;top:417px" width="10" height="7" viewBox="0 0 10 7"><path d="M0.8 1.3 L5 5.4 L9.2 1.3" stroke="#000" stroke-width="2.2" fill="none"/></svg><div class="sel" style="left:726px;top:410px;width:34px;height:20px;"></div><div class="selt" style="left:731px;top:411px;height:20px;line-height:20px;font-size:12.5px;">终</div><svg class="chev" style="left:745px;top:417px" width="10" height="7" viewBox="0 0 10 7"><path d="M0.8 1.3 L5 5.4 L9.2 1.3" stroke="#000" stroke-width="2.2" fill="none"/></svg><div class="sel" style="left:824px;top:410px;width:47px;height:20px;"></div><div class="selt" style="left:829px;top:411px;height:20px;line-height:20px;font-size:12.5px;">全场</div><svg class="chev" style="left:856px;top:417px" width="10" height="7" viewBox="0 0 10 7"><path d="M0.8 1.3 L5 5.4 L9.2 1.3" stroke="#000" stroke-width="2.2" fill="none"/></svg><div class="t bold13" style="left:22px;top:392px;">墨尔本城</div><div class="t " style="left:363px;top:391px;">近</div><div class="sel" style="left:380px;top:390px;width:35px;height:16px;"></div><div class="selt" style="left:383px;top:390px;height:16px;line-height:16px;font-size:13px;">10</div><svg class="chev" style="left:400px;top:395px" width="10" height="7" viewBox="0 0 10 7"><path d="M0.8 1.3 L5 5.4 L9.2 1.3" stroke="#000" stroke-width="2.2" fill="none"/></svg><div class="t " style="left:419px;top:391px;">场</div><svg class="cb" style="left:435px;top:392px" width="13" height="13" viewBox="0 0 13 13"><rect x="0.5" y="0.5" width="12" height="12" rx="2" fill="#fff" stroke="#767676" stroke-width="1"/></svg><div class="t " style="left:451px;top:391px;">同主</div><svg class="cb" style="left:475px;top:392px" width="13" height="13" viewBox="0 0 13 13"><rect x="0" y="0" width="13" height="13" rx="2.5" fill="#0b6fe6"/><path d="M2.6 6.6 L5.3 9.3 L10.4 3.6" stroke="#fff" stroke-width="1.9" fill="none"/></svg><div class="t " style="left:488px;top:391px;">澳超</div><svg class="cb" style="left:512px;top:392px" width="13" height="13" viewBox="0 0 13 13"><rect x="0" y="0" width="13" height="13" rx="2.5" fill="#0b6fe6"/><path d="M2.6 6.6 L5.3 9.3 L10.4 3.6" stroke="#fff" stroke-width="1.9" fill="none"/></svg><div class="t " style="left:526px;top:391px;">亚冠精英</div><svg class="cb" style="left:573px;top:392px" width="13" height="13" viewBox="0 0 13 13"><rect x="0" y="0" width="13" height="13" rx="2.5" fill="#0b6fe6"/><path d="M2.6 6.6 L5.3 9.3 L10.4 3.6" stroke="#fff" stroke-width="1.9" fill="none"/></svg><div class="t " style="left:587px;top:391px;">澳足总</div>
<div class="tan" style="left:2px;top:0;width:1px;height:352px;background:#d6cfc0"></div><div class="tan" style="left:3px;top:0;width:1px;height:352px;background:#e0c9a2"></div><div class="tan" style="left:910px;top:0;width:1px;height:352px;background:#e0c9a2"></div><div class="tan" style="left:911px;top:0;width:1px;height:352px;background:#d6cfc0"></div><div class="tan" style="left:2px;top:0;width:910px;height:1px;background:#fcefc6"></div><div class="tan" style="left:2px;top:1px;width:910px;height:1px;background:#e3d3a8"></div>
</body></html>
